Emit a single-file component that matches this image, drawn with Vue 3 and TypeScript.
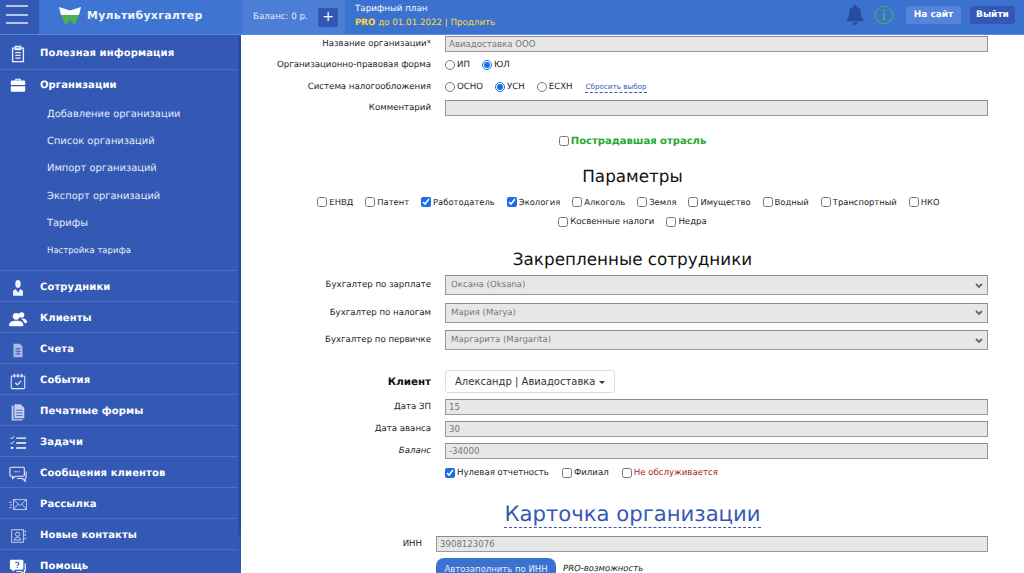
<script setup lang="ts">
interface NavItem { label: string; icon?: string; sub?: { label: string; small?: boolean }[] }

const nav: NavItem[] = [
  { label: 'Полезная информация', icon: 'clip' },
  {
    label: 'Организации', icon: 'case',
    sub: [
      { label: 'Добавление организации' },
      { label: 'Список организаций' },
      { label: 'Импорт организаций' },
      { label: 'Экспорт организаций' },
      { label: 'Тарифы' },
      { label: 'Настройка тарифа', small: true },
    ],
  },
  { label: 'Сотрудники', icon: 'person' },
  { label: 'Клиенты', icon: 'people' },
  { label: 'Счета', icon: 'doc' },
  { label: 'События', icon: 'cal' },
  { label: 'Печатные формы', icon: 'forms' },
  { label: 'Задачи', icon: 'tasks' },
  { label: 'Сообщения клиентов', icon: 'chat' },
  { label: 'Рассылка', icon: 'mail' },
  { label: 'Новые контакты', icon: 'contact' },
  { label: 'Помощь', icon: 'help' },
]

const paramsMain = [
  { label: 'ЕНВД', on: false }, { label: 'Патент', on: false }, { label: 'Работодатель', on: true },
  { label: 'Экология', on: true }, { label: 'Алкоголь', on: false }, { label: 'Земля', on: false },
  { label: 'Имущество', on: false }, { label: 'Водный', on: false }, { label: 'Транспортный', on: false },
  { label: 'НКО', on: false },
]
const paramsExtra = [
  { label: 'Косвенные налоги', on: false }, { label: 'Недра', on: false },
]

const staff = [
  { label: 'Бухгалтер по зарплате', value: 'Оксана (Oksana)' },
  { label: 'Бухгалтер по налогам', value: 'Мария (Marya)' },
  { label: 'Бухгалтер по первичке', value: 'Маргарита (Margarita)' },
]
</script>

<template>
  <div class="page">
    <header class="top">
      <div class="burger"><i></i><i></i><i></i></div>
      <div class="brand">
        <svg class="logo" viewBox="0 0 22 18" width="22" height="18">
          <path d="M0 0 L11 3.500 L22 0 L20 8 L2 8 Z" fill="#fff" />
          <path d="M2 8 H20 L16 18 L11 13 L6 18 Z" fill="#4caf50" />
        </svg>
        <span class="brand-name">Мультибухгалтер</span>
      </div>
      <div class="balance">
        <span>Баланс: 0 р.</span>
        <span class="plus">+</span>
      </div>
      <div class="tariff">
        <div>Тарифный план</div>
        <div class="tariff-y"><b>PRO</b> до 01.01.2022 | Продлить</div>
      </div>
      <div class="top-right">
        <svg class="bell" viewBox="0 0 20 22" width="18" height="20">
          <path d="M10 0c1 0 1.700.7 1.800 1.700C15 2.600 16.500 5.200 16.500 8.500c0 4 1 6 3 8v1.500H.5v-1.500c2-2 3-4 3-8 0-3.300 1.500-5.900 4.700-6.800C8.300.7 9 0 10 0z" fill="#2a4b9f" />
          <ellipse cx="10" cy="20.500" rx="3" ry="1.500" fill="#2a4b9f" />
        </svg>
        <svg class="info" viewBox="0 0 20 20" width="20" height="20">
          <circle cx="10" cy="10" r="8.800" fill="none" stroke="#4caf50" stroke-width="1.100" />
          <circle cx="10" cy="5.700" r="1.100" fill="#4caf50" />
          <path d="M8.500 8.300h2.500v6h1.200v1H8v-1h1.200v-5H8.500z" fill="#4caf50" />
        </svg>
        <span class="btn-site">На сайт</span>
        <span class="btn-exit">Выйти</span>
      </div>
    </header>

    <div class="body">
      <aside class="side">
        <template v-for="item in nav" :key="item.label">
          <div class="nav-item" :class="{ 'has-sub': item.sub }">
            <span class="nav-ico">
              <svg viewBox="0 0 20 20" width="18" height="18">
                <g v-if="item.icon === 'clip'" fill="none" stroke="#e8edf8" stroke-width="1.500">
                  <rect x="4" y="3.500" width="12" height="15" />
                  <path d="M7 1.500h6v3.500H7zM7 8.500h6M7 11.500h6M7 14.500h6" />
                </g>
                <g v-else-if="item.icon === 'case'" fill="#fff">
                  <path d="M7 3h6v2h3.500c.8 0 1.500.7 1.500 1.500V10H2V6.500C2 5.700 2.700 5 3.500 5H7zm1.300 1.300V5h3.400v-.7z" />
                  <path d="M2 11.500h16V16c0 .8-.7 1.500-1.500 1.500h-13C2.700 17.500 2 16.800 2 16z" />
                </g>
                <g v-else-if="item.icon === 'person'" fill="#eef2fb">
                  <ellipse cx="10" cy="5.500" rx="3" ry="4.300" />
                  <path d="M4.500 18.500v-4.500c0-1.500 1.800-2 3-2.500L10 15l2.500-3.500c1.200.5 3 1 3 2.500v4.500z" />
                </g>
                <g v-else-if="item.icon === 'people'" fill="#fff">
                  <circle cx="8" cy="7" r="3.800" />
                  <path d="M0 17c0-3.500 3-5 8-5s8 1.500 8 5c0 .6-.4 1-1 1H1c-.6 0-1-.4-1-1z" />
                  <circle cx="14" cy="5.500" r="3" />
                  <path d="M15 9.500c3 0 5 1.500 5 4 0 .6-.4 1-1 1h-2c-.5-2-1.500-3.500-3.500-4.500z" />
                </g>
                <g v-else-if="item.icon === 'doc'" fill="#a9bce6">
                  <path d="M5 3h7l3 3v12H5z" />
                  <path d="M7 8.500h6M7 11.500h6M7 14.500h6M10 8v7" stroke="#3459b5" stroke-width=".9" />
                </g>
                <g v-else-if="item.icon === 'cal'" fill="none" stroke="#dfe6f6" stroke-width="1.200">
                  <rect x="2.500" y="4.500" width="15" height="14" rx="1" />
                  <path d="M6 2v4M10 2v4M14 2v4" stroke-width="1.600" />
                  <path d="M7 12l2.300 2.300L13.500 10" stroke-width="1.400" />
                </g>
                <g v-else-if="item.icon === 'forms'" fill="#c3d0ee">
                  <path d="M3 3h2v15h10v1.500H3z" />
                  <path d="M6 1.500h7l4 4V17H6z" />
                  <path d="M8 8h7M8 11h7M8 14h7" stroke="#3459b5" stroke-width="1" />
                </g>
                <g v-else-if="item.icon === 'tasks'" fill="none" stroke="#fff" stroke-width="1.500">
                  <path d="M8 4.500h11M8 10h11M8 15.500h11" />
                  <path d="M1.500 4l1.500 1.500 2.500-3M1.500 9.500L3 11l2.500-3" stroke-width="1" />
                  <path d="M2 15.500h3" stroke-width="2" />
                </g>
                <g v-else-if="item.icon === 'chat'" fill="none" stroke="#e8edf8" stroke-width="1.200">
                  <path d="M2 2.500h14c.5 0 1 .5 1 1v8c0 .5-.5 1-1 1H7l-3 2.500v-2.500H2c-.5 0-1-.5-1-1v-8c0-.5.500-1 1-1z" />
                  <path d="M6 7.500h6" stroke-dasharray="1.500 1" />
                  <path d="M19 7v7c0 .5-.5 1-1 1v3l-3-3H9" />
                </g>
                <g v-else-if="item.icon === 'mail'" fill="none" stroke="#c3d0ee" stroke-width="1">
                  <rect x="5" y="4" width="14.500" height="11" />
                  <path d="M5 4l7.200 6.500L19.500 4M5 15l5-6M19.500 15l-5-6" />
                  <path d="M0 7h3M1 10h2.500M0 13h3" />
                </g>
                <g v-else-if="item.icon === 'contact'" fill="none" stroke="#c3d0ee" stroke-width="1.100">
                  <rect x="3" y="3" width="13" height="14" />
                  <circle cx="9.500" cy="8" r="2.300" />
                  <path d="M6 14.500c0-2 1.500-3 3.500-3s3.500 1 3.500 3z" />
                  <path d="M18 4v2M18 8v2M18 12v2" stroke-width="1.500" />
                </g>
                <g v-else-if="item.icon === 'help'">
                  <path d="M2.500 2h12c.8 0 1.500.7 1.500 1.500v8c0 .8-.7 1.500-1.500 1.500H7l-3 2.500V13H2.500C1.700 13 1 12.300 1 11.500v-8C1 2.700 1.700 2 2.500 2z" fill="#fff" />
                  <path d="M18 6v8h-1v3.500L13 15H8" fill="none" stroke="#fff" stroke-width="1.300" />
                  <path d="M7 5.500c1-1.300 4-1 4 .7 0 1.300-1.800 1.300-1.800 2.800M9.200 10v1.200" fill="none" stroke="#3459b5" stroke-width="1.200" />
                </g>
              </svg>
            </span>
            <span>{{ item.label }}</span>
          </div>
          <div v-if="item.sub" class="sub-list">
            <div v-for="s in item.sub" :key="s.label" class="sub-item" :class="{ small: s.small }">{{ s.label }}</div>
          </div>
        </template>
        <div class="scroll-thumb"></div>
      </aside>

      <main class="main">
        <div class="row r-name">
          <label class="lbl">Название организации*</label>
          <input class="fld" disabled value="Авиадоставка ООО" />
        </div>
        <div class="row r-opt">
          <label class="lbl">Организационно-правовая форма</label>
          <div class="opts">
            <label class="opt"><input type="radio" name="f" />ИП</label>
            <label class="opt"><input type="radio" name="f" checked />ЮЛ</label>
          </div>
        </div>
        <div class="row r-opt">
          <label class="lbl">Система налогообложения</label>
          <div class="opts">
            <label class="opt"><input type="radio" name="t" />ОСНО</label>
            <label class="opt"><input type="radio" name="t" checked />УСН</label>
            <label class="opt"><input type="radio" name="t" />ЕСХН</label>
            <span class="reset">Сбросить выбор</span>
          </div>
        </div>
        <div class="row r-comment">
          <label class="lbl">Комментарий</label>
          <input class="fld" disabled />
        </div>

        <label class="affected"><input type="checkbox" />Пострадавшая отрасль</label>

        <h2 class="h-params">Параметры</h2>
        <div class="params params-main">
          <label v-for="p in paramsMain" :key="p.label" class="chk"><input type="checkbox" :checked="p.on" />{{ p.label }}</label>
        </div>
        <div class="params params-extra">
          <label v-for="p in paramsExtra" :key="p.label" class="chk"><input type="checkbox" :checked="p.on" />{{ p.label }}</label>
        </div>

        <h2 class="h-staff">Закрепленные сотрудники</h2>
        <div v-for="s in staff" :key="s.label" class="row r-staff">
          <label class="lbl">{{ s.label }}</label>
          <div class="sel">
            <span>{{ s.value }}</span>
            <svg viewBox="0 0 8 5" width="8" height="5"><path d="M1 1l3 3 3-3" fill="none" stroke="#666" stroke-width="1.800" /></svg>
          </div>
        </div>

        <div class="row r-client">
          <label class="lbl client-lbl">Клиент</label>
          <button class="client-btn">Александр | Авиадоставка <i class="caret"></i></button>
        </div>
        <div class="row r-date">
          <label class="lbl">Дата ЗП</label>
          <input class="fld" disabled value="15" />
        </div>
        <div class="row r-date">
          <label class="lbl">Дата аванса</label>
          <input class="fld" disabled value="30" />
        </div>
        <div class="row r-date">
          <label class="lbl"><em>Баланс</em></label>
          <input class="fld" disabled value="-34000" />
        </div>
        <div class="row r-flags">
          <span></span>
          <div class="flags">
            <label class="chk"><input type="checkbox" checked />Нулевая отчетность</label>
            <label class="chk"><input type="checkbox" />Филиал</label>
            <label class="chk red"><input type="checkbox" />Не обслуживается</label>
          </div>
        </div>

        <h1 class="card-title"><span>Карточка организации</span></h1>

        <div class="row r-inn">
          <label class="lbl">ИНН</label>
          <input class="fld" disabled value="3908123076" />
        </div>
        <div class="row r-auto">
          <span></span>
          <div class="auto">
            <button class="auto-btn">Автозаполнить по ИНН</button>
            <em>PRO-возможность</em>
          </div>
        </div>
      </main>
    </div>
  </div>
</template>

<style>
html, body { margin: 0; overflow: hidden; }
</style>

<style scoped>
.page {
  width: 1024px;
  height: 573px;
  overflow: hidden;
  font-family: "DejaVu Sans", Verdana, sans-serif;
  font-size: 8.600px;
  color: #222;
  background: #fff;
  text-rendering: geometricPrecision;
}
.top {
  height: 34px;
  display: flex;
  align-items: stretch;
  background: #3c72cf;
  border-bottom: 1px solid #5b89d9;
  color: #fff;
}
.burger {
  width: 39px;
  background: #3459b5;
  display: flex;
  flex-direction: column;
  gap: 6.500px;
  padding: 5px 0 0 6px;
  box-sizing: border-box;
}
.burger i { display: block; width: 22px; height: 2px; background: #b8c6e6; }
.brand {
  width: 203px;
  background: #3f74d2;
  display: flex;
  align-items: center;
  gap: 6px;
  padding: 0 0 3px 20px;
  box-sizing: border-box;
}
.brand-name { font-size: 10.900px; font-weight: 700; letter-spacing: .3px; color: #eef3fc; }
.balance {
  width: 103px;
  background: #4d7ed6;
  display: flex;
  align-items: center;
  justify-content: space-between;
  padding: 0 7px 0 11px;
  box-sizing: border-box;
  font-size: 8.700px;
  color: #e6edfa;
}
.plus {
  width: 20px;
  height: 19px;
  background: #3358b3;
  display: flex;
  align-items: center;
  justify-content: center;
  font-size: 14px;
  color: #fff;
}
.tariff { padding: 3px 0 0 10px; font-size: 8.700px; line-height: 13.500px; }
.tariff-y { color: #ffdc32; }
.top-right {
  margin-left: auto;
  display: flex;
  align-items: center;
  padding: 0 9px 4px 0;
}
.bell { margin-right: 10px; }
.info { margin-right: 12px; }
.btn-site, .btn-exit {
  height: 18px;
  display: flex;
  align-items: center;
  justify-content: center;
  border-radius: 3px;
  font-weight: 700;
  font-size: 9px;
}
.btn-site { width: 55px; background: #5584d9; margin-right: 9px; }
.btn-exit { width: 45px; background: #3358b3; }

.body { display: flex; height: 538px; }
.side {
  position: relative;
  width: 241px;
  flex: none;
  background: #3459b5;
  color: #fff;
}
.scroll-thumb {
  position: absolute;
  top: 2px;
  right: 0;
  width: 3px;
  height: 498px;
  background: #2b4c9f;
}
.nav-item {
  box-sizing: border-box;
  height: 31px;
  padding-top: 3px;
  margin-right: 3px;
  display: flex;
  align-items: center;
  border-bottom: 1px solid #4a6fc4;
  font-size: 10px;
  font-weight: 700;
  letter-spacing: .1px;
}
.nav-item:first-child { height: 35px; padding-top: 3px; }
.nav-item.has-sub { border-bottom: 0; height: 29px; padding-top: 1px; }
.nav-ico { width: 40px; display: flex; justify-content: center; padding-right: 5px; box-sizing: border-box; }
.sub-list { border-bottom: 1px solid #4a6fc4; margin-right: 3px; padding: 2px 0 6px; }
.sub-item {
  height: 27.200px;
  display: flex;
  align-items: center;
  padding-left: 47px;
  font-size: 9.900px;
  color: #e6ebf8;
}
.sub-item.small { font-size: 8.500px; }

.main { flex: 1; min-width: 0; box-sizing: border-box; padding-top: 1px; }
.row { display: grid; grid-template-columns: 190px 1fr; column-gap: 14px; align-items: center; margin-right: 36px; }
.lbl { text-align: right; }
.fld {
  width: 100%;
  box-sizing: border-box;
  height: 16px;
  padding: 0 3px;
  border: 1px solid #999;
  border-top: 1.500px solid #8c8c8c;
  background: #e7e7e7;
  font: inherit;
  color: #777;
  outline: none;
  display: block;
}
.r-opt { height: 22px; }
.r-name { margin-bottom: 2px; }
.r-comment { margin-top: 2px; }
.opts { display: flex; align-items: center; }
.opt { display: flex; align-items: center; margin-right: 12px; }
.opt input, .chk input, .affected input {
  width: 10px;
  height: 10px;
  margin: 0 2px 0 0;
  accent-color: #1a6fe8;
}
.reset {
  color: #3459b5;
  font-size: 7.200px;
  border-bottom: 1px dashed #3459b5;
  line-height: 10px;
  margin-left: 1px;
}
.affected {
  display: flex;
  justify-content: center;
  align-items: center;
  margin-top: 18px;
  font-size: 10px;
  font-weight: 700;
  color: #1eaa32;
  height: 14px;
}
h2 { font-weight: 400; color: #111; font-size: 16.800px; text-align: center; margin: 0; line-height: 22px; }
.h-params { margin-top: 17px; }
.params {
  display: flex;
  justify-content: center;
  column-gap: 12px;
}
.params-main { margin: 9px 8px 0 0; font-size: 8.400px; }
.params-extra { margin-top: 8px; }
.chk { display: flex; align-items: center; line-height: 12px; }
.h-staff { margin-top: 20px; margin-bottom: 5px; }
.r-staff { margin-bottom: 7.500px; }
.sel {
  height: 20px;
  box-sizing: border-box;
  border: 1px solid #999;
  border-top: 1.500px solid #8c8c8c;
  background: #e7e7e7;
  color: #777;
  display: flex;
  align-items: center;
  justify-content: space-between;
  padding: 0 4px 0 5px;
}
.r-client { margin-top: 20px; }
.client-lbl { font-weight: 700; font-size: 10.300px; color: #111; }
.client-btn {
  justify-self: start;
  height: 23px;
  padding: 0 9px;
  background: #fff;
  border: 1px solid #ddd;
  border-radius: 3px;
  font: inherit;
  font-size: 10px;
  color: #333;
}
.caret {
  display: inline-block;
  width: 0;
  height: 0;
  border-left: 3px solid transparent;
  border-right: 3px solid transparent;
  border-top: 3px solid #333;
  vertical-align: middle;
}
.r-date { margin-top: 6px; }
.r-flags { margin-top: 7px; height: 14px; }
.flags { display: flex; gap: 13px; }
.red { color: #a51c1c; }
.card-title {
  font-size: 21.200px;
  font-weight: 400;
  color: #3459b5;
  text-align: center;
  margin: 20px 0 0;
  line-height: 28px;
}
.card-title span { border-bottom: 1px dashed #3459b5; padding-bottom: 1px; }
.r-inn { grid-template-columns: 181px 1fr; margin-top: 8px; }
.r-auto { grid-template-columns: 181px 1fr; margin-top: 6px; }
.auto { display: flex; align-items: center; gap: 7px; font-size: 8.500px; color: #222; }
.auto-btn {
  height: 22px;
  width: 120px;
  padding: 0;
  background: #3c72cf;
  color: #e8eefb;
  border: 0;
  border-radius: 8px;
  font: inherit;
  font-size: 8.500px;
}
</style>
